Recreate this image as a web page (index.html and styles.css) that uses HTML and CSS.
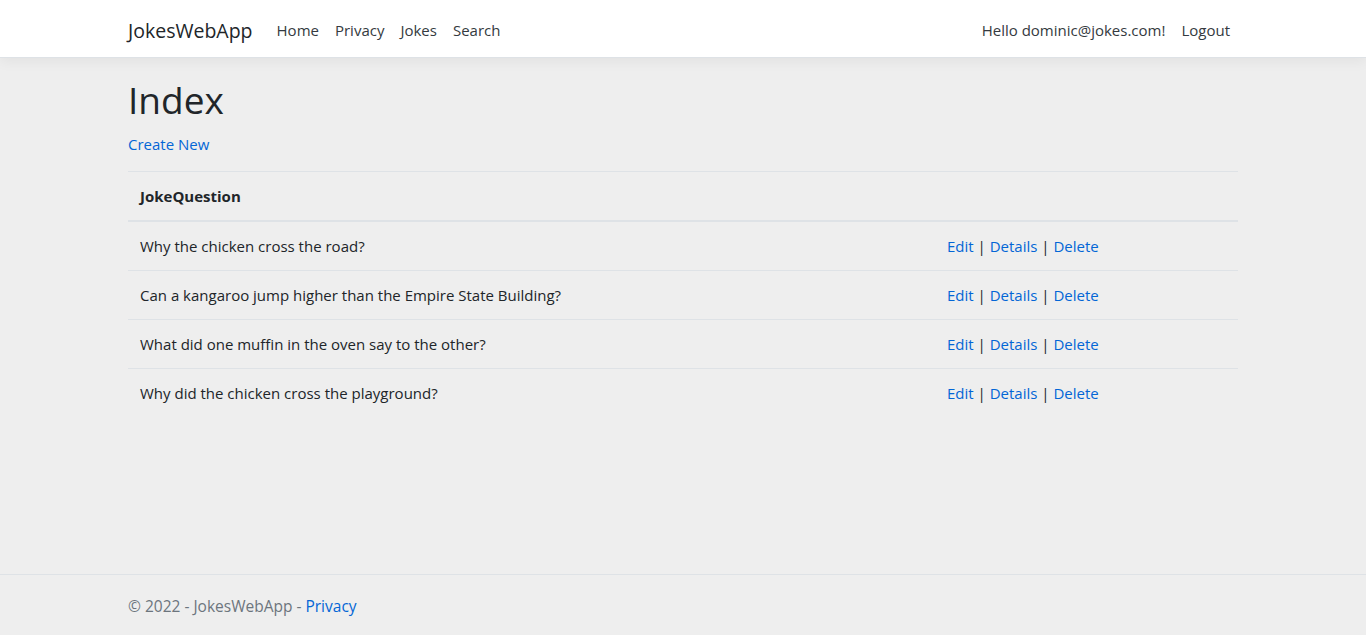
FILE: index.html
```html
<!DOCTYPE html>
<html lang="en">
<head>
<meta charset="utf-8">
<title>Index - JokesWebApp</title>
<link rel="stylesheet" href="styles.css">
</head>
<body>
<header>
  <nav class="navbar">
    <div class="container nav-inner">
      <a class="brand" href="#">JokesWebApp</a>
      <ul class="nav-list grow">
        <li><a class="nav-link" href="#">Home</a></li>
        <li><a class="nav-link" href="#">Privacy</a></li>
        <li><a class="nav-link" href="#">Jokes</a></li>
        <li><a class="nav-link" href="#">Search</a></li>
      </ul>
      <ul class="nav-list">
        <li><a class="nav-link" href="#">Hello dominic@jokes.com!</a></li>
        <li><a class="nav-link" href="#">Logout</a></li>
      </ul>
    </div>
  </nav>
</header>
<div class="container">
  <main class="main">
    <h1 class="title">Index</h1>
    <p class="create"><a href="#">Create New</a></p>
    <table class="table">
      <thead>
        <tr><th>JokeQuestion</th><th class="actions"></th></tr>
      </thead>
      <tbody>
        <tr><td>Why the chicken cross the road?</td><td class="actions"><a href="#">Edit</a> | <a href="#">Details</a> | <a href="#">Delete</a></td></tr>
        <tr><td>Can a kangaroo jump higher than the Empire State Building?</td><td class="actions"><a href="#">Edit</a> | <a href="#">Details</a> | <a href="#">Delete</a></td></tr>
        <tr><td>What did one muffin in the oven say to the other?</td><td class="actions"><a href="#">Edit</a> | <a href="#">Details</a> | <a href="#">Delete</a></td></tr>
        <tr><td>Why did the chicken cross the playground?</td><td class="actions"><a href="#">Edit</a> | <a href="#">Details</a> | <a href="#">Delete</a></td></tr>
      </tbody>
    </table>
  </main>
</div>
<footer class="footer">
  <div class="container">&copy; 2022 - JokesWebApp - <a href="#">Privacy</a></div>
</footer>
</body>
</html>
```
FILE: styles.css
```css
* { box-sizing: border-box; }
html { height: 100%; }
body {
  margin: 0;
  min-height: 100%;
  position: relative;
  background: #eeeeee;
  color: #212529;
  font-family: "Open Sans", "Noto Sans", sans-serif;
  font-size: 15px;
  line-height: 24px;
}
a { color: #0366d6; text-decoration: none; }
.container {
  width: 1140px;
  margin: 0 auto;
  padding: 0 15px;
}
.navbar {
  background: #fff;
  border-bottom: 1px solid #dee2e6;
  box-shadow: 0 .25rem .75rem rgba(0,0,0,.05);
  padding: 10px 0 7px;
  margin-bottom: 16px;
}
.nav-inner { display: flex; align-items: center; }
.brand {
  color: #212529;
  font-size: 19.5px;
  line-height: 30px;
  padding: 6px 0 4px;
  margin-right: 16px;
}
.nav-list { display: flex; list-style: none; margin: 0; padding: 0; }
.grow { flex: 1; }
.nav-link { display: block; color: #343a40; padding: 8px; line-height: 24px; }
.main { padding-bottom: 16px; }
.title {
  font-size: 37px;
  font-weight: 400;
  line-height: 48px;
  margin: 0 0 8px;
  padding-top: 2px;
}
.create { margin: 0 0 15px; }
.table { width: 100%; border-collapse: collapse; color: #212529; }
.table th, .table td {
  text-align: left;
  padding: 12px;
  border-top: 1px solid #dee2e6;
  vertical-align: top;
}
.table th { font-weight: 700; border-bottom: 2px solid #dee2e6; }
.table .actions { width: 303px; }
.footer {
  position: absolute;
  bottom: 0;
  width: 100%;
  border-top: 1px solid #dee2e6;
  color: #6c757d;
  white-space: nowrap;
}
.footer .container { padding-top: 2px; line-height: 58px; font-size: 15.5px; }
```
